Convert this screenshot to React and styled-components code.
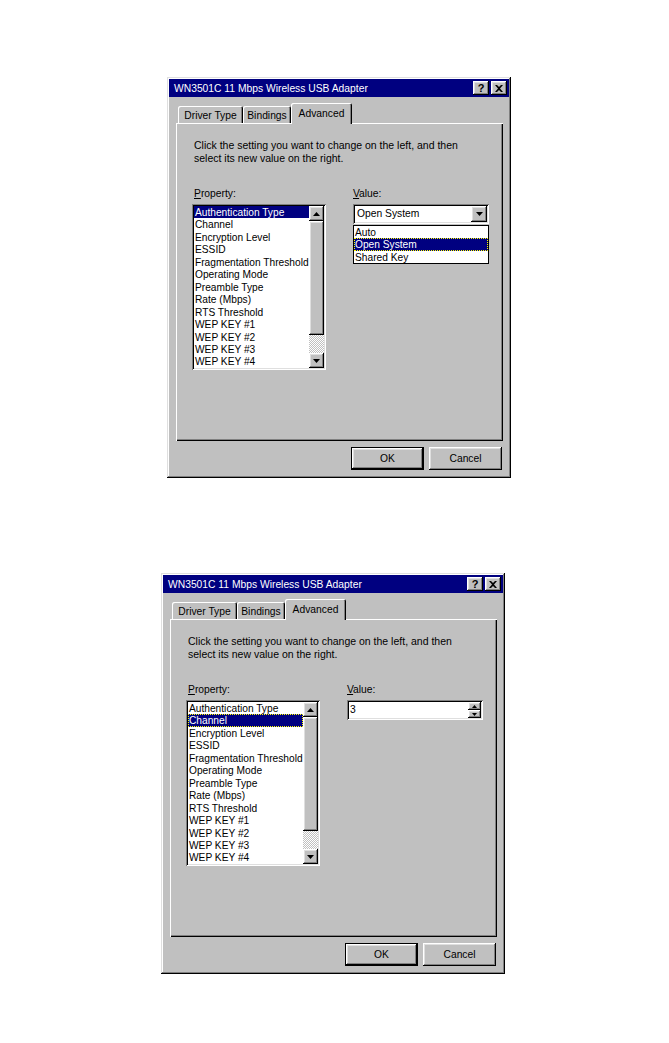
import React from 'react';
import styled, { createGlobalStyle, css } from 'styled-components';

const Global = createGlobalStyle`
  html, body { margin: 0; padding: 0; background: #ffffff; }
  body { font-family: "Liberation Sans", Arial, sans-serif; color: #000; }
`;

const raised = css`
  box-shadow: inset -1px -1px #000, inset 1px 1px #fff, inset -2px -2px #808080, inset 2px 2px #dfdfdf;
`;
const sunken = css`
  box-shadow: inset 1px 1px #808080, inset -1px -1px #fff, inset 2px 2px #000, inset -2px -2px #dfdfdf;
`;

const Page = styled.div`
  display: flex;
  flex-direction: column;
  align-items: flex-start;
  padding: 77px 0 60px;
  gap: 95px;
`;

const Window = styled.div`
  margin-left: ${(p) => p.$left}px;
  width: 344px;
  box-sizing: border-box;
  padding: 2px;
  background: #c0c0c0;
  box-shadow: inset -1px -1px #000, inset 1px 1px #dfdfdf, inset -2px -2px #808080, inset 2px 2px #fff;
  font-size: 10.3px;
  display: flex;
  flex-direction: column;
`;

const TitleBar = styled.div`
  height: 18px;
  background: #000080;
  color: #fff;
  display: flex;
  align-items: center;
  padding: 0 2px 0 5px;
`;

const TitleText = styled.div`
  flex: 1;
  white-space: nowrap;
  font-size: 10.3px;
`;

const TitleButtons = styled.div`
  display: flex;
  gap: 2px;
`;

const TitleButton = styled.div`
  width: 16px;
  height: 14px;
  box-sizing: border-box;
  background: #c0c0c0;
  ${raised};
  display: flex;
  align-items: center;
  justify-content: center;
  color: #000;
  font-weight: bold;
  font-size: 11px;
  line-height: 14px;
`;

const Body = styled.div`
  padding: 6px 6px 6px 7px;
  display: flex;
  flex-direction: column;
`;

const TabStrip = styled.div`
  display: flex;
  align-items: flex-end;
  height: 20px;
  padding-left: 2px;
  position: relative;
  z-index: 1;
`;

const Tab = styled.div`
  width: ${(p) => p.$w}px;
  height: ${(p) => (p.$active ? 21 : 17)}px;
  margin-bottom: ${(p) => (p.$active ? -1 : 0)}px;
  box-sizing: border-box;
  background: #c0c0c0;
  border-radius: 2px 2px 0 0;
  box-shadow: inset 1px 1px #fff, inset -1px 0 #000, inset -2px 0 #808080;
  display: flex;
  align-items: center;
  justify-content: center;
  padding: ${(p) => (p.$active ? '0 0 1px' : '2px 0 0')};
  white-space: nowrap;
`;

const Panel = styled.div`
  height: 318px;
  box-sizing: border-box;
  background: #c0c0c0;
  box-shadow: inset 1px 1px #fff, inset -1px -1px #000, inset -2px -2px #808080;
  padding: 16px 0 0 16px;
`;

const Intro = styled.div`
  margin-left: 2px;
  line-height: 13px;
  font-size: 10.5px;
`;

const Columns = styled.div`
  display: flex;
  gap: 27px;
  margin-top: 22px;
`;

const Column = styled.div`
  display: flex;
  flex-direction: column;
`;

const Label = styled.div`
  line-height: 13px;
  margin: 0 0 4px ${(p) => p.$indent || 0}px;
`;

const Key = styled.span`
  text-decoration: underline;
`;

const ListBox = styled.div`
  width: 134px;
  height: 166px;
  box-sizing: border-box;
  padding: 2px;
  background: #fff;
  ${sunken};
  display: flex;
`;

const Items = styled.div`
  flex: 1;
  min-width: 0;
  display: flex;
  flex-direction: column;
  overflow: hidden;
`;

const Item = styled.div`
  height: 12.46px;
  line-height: 13px;
  font-size: 10.2px;
  padding-left: 1px;
  white-space: nowrap;
  overflow: hidden;
  background: ${(p) => (p.$sel ? '#000080' : 'transparent')};
  color: ${(p) => (p.$sel ? '#fff' : '#000')};
  outline: ${(p) => (p.$focus ? '1px dotted #ffff00' : 'none')};
  outline-offset: -1px;
`;

const ScrollBar = styled.div`
  width: 15px;
  display: flex;
  flex-direction: column;
`;

const ArrowButton = styled.div`
  height: ${(p) => p.$h || 15}px;
  flex: 0 0 auto;
  box-sizing: border-box;
  background: #c0c0c0;
  ${raised};
  display: flex;
  align-items: center;
  justify-content: center;
`;

const Thumb = styled.div`
  height: 114px;
  box-sizing: border-box;
  background: #c0c0c0;
  ${raised};
`;

const Track = styled.div`
  flex: 1;
  background: repeating-conic-gradient(#c0c0c0 0 25%, #ffffff 0 50%) 0 0 / 2px 2px;
`;

const Combo = styled.div`
  position: relative;
  width: 136px;
  height: 20px;
  box-sizing: border-box;
  padding: 2px;
  background: #fff;
  ${sunken};
  display: flex;
`;

const ComboText = styled.div`
  flex: 1;
  padding-left: ${(p) => p.$pad}px;
  line-height: 16px;
  white-space: nowrap;
`;

const DropButton = styled.div`
  width: 16px;
  height: 16px;
  box-sizing: border-box;
  background: #c0c0c0;
  ${raised};
  display: flex;
  align-items: center;
  justify-content: center;
`;

const DropList = styled.div`
  position: absolute;
  top: calc(100% + 1px);
  left: 0;
  width: 136px;
  box-sizing: border-box;
  border: 1px solid #000;
  background: #fff;
  display: flex;
  flex-direction: column;
  z-index: 2;
`;

const Spinner = styled.div`
  width: 13px;
  display: flex;
  flex-direction: column;
`;

const ButtonRow = styled.div`
  display: flex;
  justify-content: flex-end;
  gap: 5px;
  margin-top: 6px;
  padding-right: 1px;
`;

const Button = styled.div`
  width: 73px;
  height: 23px;
  box-sizing: border-box;
  background: #c0c0c0;
  display: flex;
  align-items: center;
  justify-content: center;
  ${(p) =>
    p.$default
      ? css`
          box-shadow: inset 0 0 0 1px #000, inset -2px -2px #000, inset 2px 2px #fff,
            inset -3px -3px #808080, inset 3px 3px #dfdfdf;
        `
      : raised}
`;

const Up = ({ w = 7, h = 4 }) => (
  <svg width={w} height={h} viewBox={`0 0 ${w} ${h}`}>
    <polygon points={`${w / 2},0 ${w},${h} 0,${h}`} fill="#000" />
  </svg>
);
const Down = ({ w = 7, h = 4 }) => (
  <svg width={w} height={h} viewBox={`0 0 ${w} ${h}`}>
    <polygon points={`0,0 ${w},0 ${w / 2},${h}`} fill="#000" />
  </svg>
);
const CloseGlyph = () => (
  <svg width="8" height="7" viewBox="0 0 8 7">
    <path d="M0 0h2l2 2 2-2h2L5 3.5 8 7H6L4 5 2 7H0l3-3.5z" fill="#000" />
  </svg>
);

const PROPS = [
  'Authentication Type',
  'Channel',
  'Encryption Level',
  'ESSID',
  'Fragmentation Threshold',
  'Operating Mode',
  'Preamble Type',
  'Rate (Mbps)',
  'RTS Threshold',
  'WEP KEY #1',
  'WEP KEY #2',
  'WEP KEY #3',
  'WEP KEY #4',
];

const OPTIONS = ['Auto', 'Open System', 'Shared Key'];

function Dialog({ left, selected, focusList, children }) {
  return (
    <Window $left={left}>
      <TitleBar>
        <TitleText>WN3501C 11 Mbps Wireless USB Adapter</TitleText>
        <TitleButtons>
          <TitleButton>?</TitleButton>
          <TitleButton>
            <CloseGlyph />
          </TitleButton>
        </TitleButtons>
      </TitleBar>
      <Body>
        <TabStrip>
          <Tab $w={65}>Driver Type</Tab>
          <Tab $w={48}>Bindings</Tab>
          <Tab $w={61} $active>
            Advanced
          </Tab>
        </TabStrip>
        <Panel>
          <Intro>
            Click the setting you want to change on the left, and then
            <br />
            select its new value on the right.
          </Intro>
          <Columns>
            <Column>
              <Label $indent={2}>
                <Key>P</Key>roperty:
              </Label>
              <ListBox>
                <Items>
                  {PROPS.map((p, i) => (
                    <Item key={p} $sel={i === selected} $focus={focusList && i === selected}>
                      {p}
                    </Item>
                  ))}
                </Items>
                <ScrollBar>
                  <ArrowButton>
                    <Up />
                  </ArrowButton>
                  <Thumb />
                  <Track />
                  <ArrowButton>
                    <Down />
                  </ArrowButton>
                </ScrollBar>
              </ListBox>
            </Column>
            <Column>
              <Label>
                <Key>V</Key>alue:
              </Label>
              {children}
            </Column>
          </Columns>
        </Panel>
        <ButtonRow>
          <Button $default>OK</Button>
          <Button>Cancel</Button>
        </ButtonRow>
      </Body>
    </Window>
  );
}

export default function App() {
  return (
    <>
      <Global />
      <Page>
        <Dialog left={167} selected={0}>
          <Combo>
            <ComboText $pad={2}>Open System</ComboText>
            <DropButton>
              <Down />
            </DropButton>
            <DropList>
              {OPTIONS.map((o, i) => (
                <Item key={o} $sel={i === 1} $focus={i === 1}>
                  {o}
                </Item>
              ))}
            </DropList>
          </Combo>
        </Dialog>
        <Dialog left={161} selected={1} focusList>
          <Combo>
            <ComboText $pad={1}>3</ComboText>
            <Spinner>
              <ArrowButton $h={8}>
                <Up w={5} h={3} />
              </ArrowButton>
              <ArrowButton $h={8}>
                <Down w={5} h={3} />
              </ArrowButton>
            </Spinner>
          </Combo>
        </Dialog>
      </Page>
    </>
  );
}
